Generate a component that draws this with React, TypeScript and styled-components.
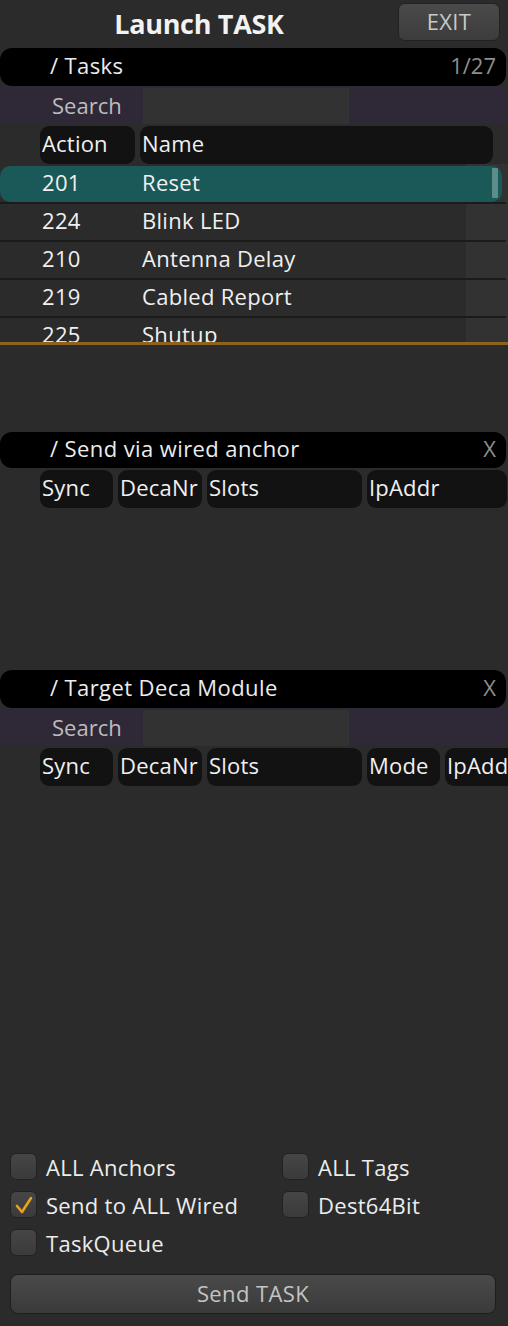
import React from "react";
import styled, { createGlobalStyle } from "styled-components";

const Global = createGlobalStyle`
  html, body {
    margin: 0;
    padding: 0;
    background: #2b2b2b;
  }
  body {
    font-family: "Open Sans", "Noto Sans", sans-serif;
    color: #e6e6e6;
  }
`;

const Screen = styled.div`
  width: 508px;
  height: 1326px;
  display: flex;
  flex-direction: column;
  background: #2b2b2b;
  overflow: hidden;
`;

const TopBar = styled.div`
  height: 48px;
  display: flex;
  align-items: center;
  padding-right: 8px;
`;

const Title = styled.div`
  flex: 1;
  text-align: center;
  font-size: 27px;
  font-weight: 700;
  color: #f2f2f2;
  letter-spacing: -0.3px;
  padding-bottom: 2px;
`;

const ExitButton = styled.button`
  width: 102px;
  height: 38px;
  margin-top: -4px;
  border-radius: 7px;
  border: 1px solid #222;
  background: linear-gradient(#4a4a4a, #3c3c3c);
  color: #c8c8c8;
  font-family: inherit;
  font-size: 22px;
  letter-spacing: 0.3px;
  padding: 0 0 2px;
`;

const Section = styled.div<{ $h?: number }>`
  display: flex;
  flex-direction: column;
  height: ${(p) => (p.$h ? `${p.$h}px` : "auto")};
  flex-shrink: 0;
`;

const SectionHeader = styled.div<{ $h: number }>`
  height: ${(p) => p.$h}px;
  margin-right: 2px;
  background: #000;
  border-radius: 12px;
  display: flex;
  align-items: center;
  padding: 0 10px 5px 50px;
  box-sizing: border-box;
  font-size: 22px;
  letter-spacing: 0.4px;
  color: #ececec;
`;

const HeaderTitle = styled.div`
  flex: 1;
`;

const HeaderAside = styled.div`
  color: #8e8e8e;
  font-size: 22px;
  letter-spacing: 0;
`;

const SearchRow = styled.div`
  height: 38px;
  background: #2f2837;
  display: flex;
  align-items: center;
`;

const SearchLabel = styled.div`
  width: 143px;
  padding-left: 52px;
  box-sizing: border-box;
  font-size: 22px;
  color: #bdbdbd;
`;

const SearchInput = styled.div`
  width: 206px;
  height: 36px;
  margin-top: 2px;
  background: #323232;
`;

const ColumnRow = styled.div`
  height: 38px;
  margin-top: 2px;
  display: flex;
  gap: 5px;
  padding-left: 40px;
  overflow: hidden;
`;

const ColumnCell = styled.div<{ $w: number }>`
  width: ${(p) => p.$w}px;
  flex-shrink: 0;
  height: 38px;
  background: #121212;
  border-radius: 9px;
  display: flex;
  align-items: center;
  padding: 0 0 5px 2px;
  font-size: 22px;
  letter-spacing: 0.2px;
  color: #f0f0f0;
  white-space: nowrap;
  overflow: hidden;
  box-sizing: border-box;
`;

const List = styled.div`
  position: relative;
  height: 176px;
  flex-shrink: 0;
  overflow: hidden;
  border-bottom: 3px solid #8c6420;
  background: linear-gradient(90deg, #2b2b2b 466px, #323232 466px);
  padding-top: 2px;
`;

const Row = styled.div`
  height: 36px;
  border-bottom: 2px solid #1b1b1b;
  margin-right: 2px;
`;

const RowInner = styled.div<{ $selected?: boolean }>`
  height: 100%;
  display: flex;
  align-items: center;
  padding-bottom: 4px;
  box-sizing: border-box;
  font-size: 22px;
  letter-spacing: 0.3px;
  color: #f0f0f0;
  background: ${(p) => (p.$selected ? "#1b5858" : "transparent")};
  border-radius: ${(p) => (p.$selected ? "10px" : "0")};
  margin-right: ${(p) => (p.$selected ? "4px" : "0")};
`;

const RowId = styled.div`
  width: 100px;
  padding-left: 42px;
`;

const RowName = styled.div`
  flex: 1;
`;

const Thumb = styled.div`
  position: absolute;
  left: 492px;
  top: 4px;
  width: 6px;
  height: 30px;
  background: #5b8d8b;
  border-radius: 1px;
`;

const Spacer = styled.div`
  flex: 1;
`;

const Options = styled.div`
  display: grid;
  grid-template-columns: 272px 1fr;
  row-gap: 11px;
  padding-left: 10px;
`;

const Option = styled.label`
  display: flex;
  align-items: center;
  gap: 9px;
  height: 27px;
  font-size: 22px;
  letter-spacing: 0.3px;
  color: #ececec;
`;

const Box = styled.div`
  width: 27px;
  height: 27px;
  border-radius: 6px;
  background: linear-gradient(#464646, #3a3a3a);
  border: 1px solid #222;
  box-sizing: border-box;
  display: flex;
  align-items: center;
  justify-content: center;
`;

const SendButton = styled.button`
  margin: 18px 12px 12px 10px;
  height: 40px;
  border-radius: 8px;
  border: 1px solid #1e1e1e;
  background: linear-gradient(#4a4a4a, #3a3a3a);
  color: #c4c4c4;
  font-family: inherit;
  font-size: 22px;
  letter-spacing: 0.4px;
  padding: 0 0 2px;
`;

const tasks = [
  { id: 201, name: "Reset" },
  { id: 224, name: "Blink LED" },
  { id: 210, name: "Antenna Delay" },
  { id: 219, name: "Cabled Report" },
  { id: 225, name: "Shutup" },
];

const Check = ({ on, label }: { on?: boolean; label: string }) => (
  <Option>
    <Box>
      {on && (
        <svg width="20" height="20" viewBox="0 0 20 20">
          <path d="M3 11 L8 17 L17 3" fill="none" stroke="#e8a21c" strokeWidth="2.6" strokeLinecap="round" strokeLinejoin="round" />
        </svg>
      )}
    </Box>
    {label}
  </Option>
);

export default function App() {
  return (
    <Screen>
      <Global />
      <TopBar>
        <Title>Launch TASK</Title>
        <ExitButton>EXIT</ExitButton>
      </TopBar>

      <Section $h={384}>
        <SectionHeader $h={38}>
          <HeaderTitle>/ Tasks</HeaderTitle>
          <HeaderAside>1/27</HeaderAside>
        </SectionHeader>
        <SearchRow>
          <SearchLabel>Search</SearchLabel>
          <SearchInput />
        </SearchRow>
        <ColumnRow>
          <ColumnCell $w={95}>Action</ColumnCell>
          <ColumnCell $w={353}>Name</ColumnCell>
        </ColumnRow>
        <List>
          {tasks.map((t, i) => (
            <Row key={t.id}>
              <RowInner $selected={i === 0}>
                <RowId>{t.id}</RowId>
                <RowName>{t.name}</RowName>
              </RowInner>
            </Row>
          ))}
          <Thumb />
        </List>
      </Section>

      <Section $h={238}>
        <SectionHeader $h={36}>
          <HeaderTitle>/ Send via wired anchor</HeaderTitle>
          <HeaderAside>X</HeaderAside>
        </SectionHeader>
        <ColumnRow>
          <ColumnCell $w={73}>Sync</ColumnCell>
          <ColumnCell $w={84}>DecaNr</ColumnCell>
          <ColumnCell $w={155}>Slots</ColumnCell>
          <ColumnCell $w={140}>IpAddr</ColumnCell>
        </ColumnRow>
      </Section>

      <Section>
        <SectionHeader $h={38}>
          <HeaderTitle>/ Target Deca Module</HeaderTitle>
          <HeaderAside>X</HeaderAside>
        </SectionHeader>
        <SearchRow>
          <SearchLabel>Search</SearchLabel>
          <SearchInput />
        </SearchRow>
        <ColumnRow>
          <ColumnCell $w={73}>Sync</ColumnCell>
          <ColumnCell $w={84}>DecaNr</ColumnCell>
          <ColumnCell $w={155}>Slots</ColumnCell>
          <ColumnCell $w={73}>Mode</ColumnCell>
          <ColumnCell $w={80}>IpAddr</ColumnCell>
        </ColumnRow>
      </Section>

      <Spacer />

      <Options>
        <Check label="ALL Anchors" />
        <Check label="ALL Tags" />
        <Check on label="Send to ALL Wired" />
        <Check label="Dest64Bit" />
        <Check label="TaskQueue" />
      </Options>

      <SendButton>Send TASK</SendButton>
    </Screen>
  );
}
